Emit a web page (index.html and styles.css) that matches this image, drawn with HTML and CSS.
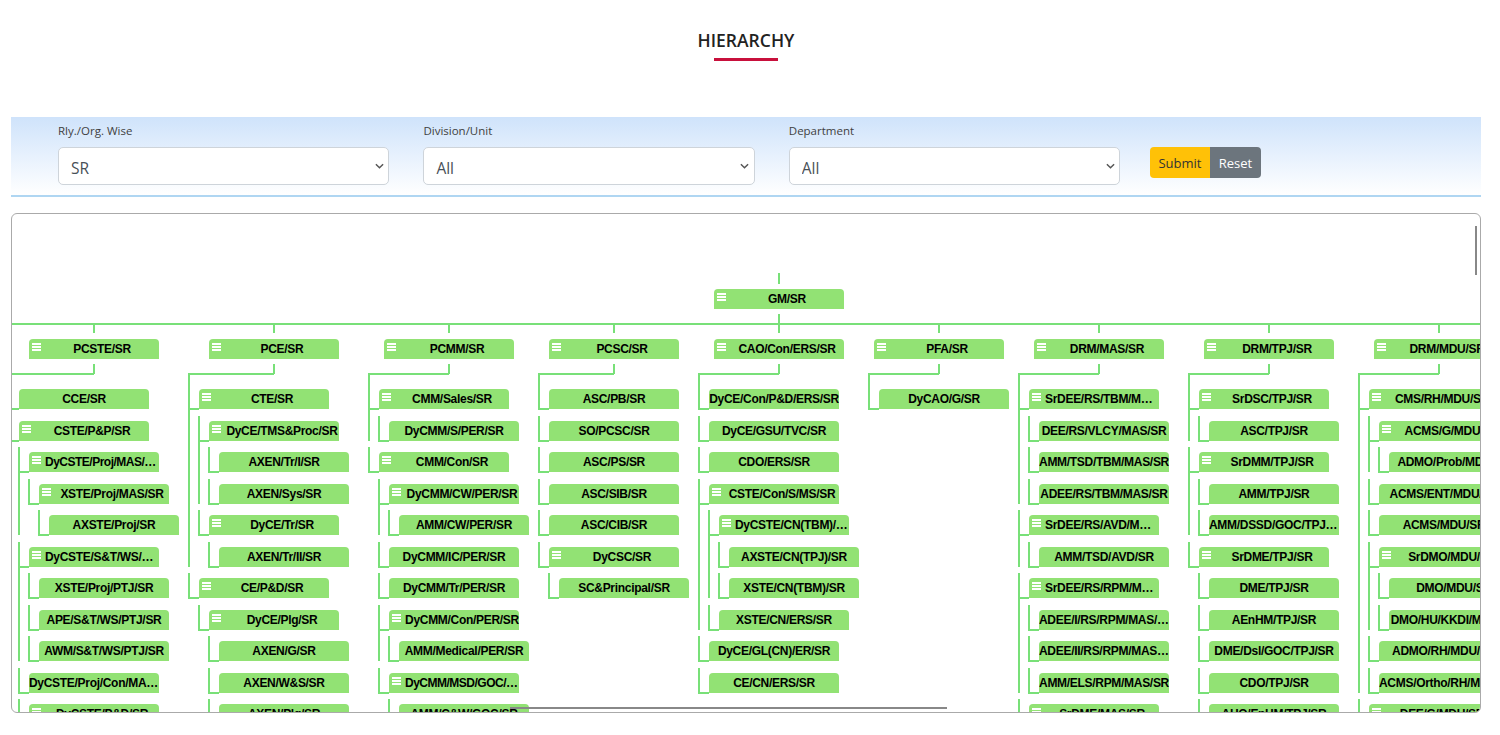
FILE: index.html
```html
<!DOCTYPE html>
<html lang="en">
  <head>
    <meta charset="UTF-8" />
    <meta name="viewport" content="width=device-width, initial-scale=1.0" />
    <title>Hierarchy</title>
    <link rel="stylesheet" href="styles.css">
  </head>
  <body>
    <div class="page">
      <div class="title-block">
        <h1 class="page-title">HIERARCHY</h1>
        <div class="title-line"></div>
      </div>

      <form class="filter-bar">
        <div class="field">
          <label for="rly">Rly./Org. Wise</label>
          <select id="rly"><option>SR</option></select>
        </div>
        <div class="field">
          <label for="division">Division/Unit</label>
          <select id="division"><option>All</option></select>
        </div>
        <div class="field">
          <label for="department">Department</label>
          <select id="department"><option>All</option></select>
        </div>
        <div class="btn-group">
          <button type="button" class="btn btn-submit">Submit</button>
          <button type="reset" class="btn btn-reset">Reset</button>
        </div>
      </form>

      <div class="chart">
        <div class="node menu root">GM/SR</div>
        <div class="trunk"></div>

        <div class="columns">
          <!-- PCSTE -->
          <div class="col w180 shift-10">
            <div class="node menu head">PCSTE/SR</div>
            <ul class="tree">
              <li><div class="node">CCE/SR</div></li>
              <li><div class="node menu">CSTE/P&amp;P/SR</div>
                <ul>
                  <li><div class="node menu tight">DyCSTE/Proj/MAS/SR</div>
                    <ul>
                      <li><div class="node menu">XSTE/Proj/MAS/SR</div>
                        <ul><li><div class="node">AXSTE/Proj/SR</div></li></ul>
                      </li>
                    </ul>
                  </li>
                  <li><div class="node menu">DyCSTE/S&amp;T/WS/PTJ/SR</div>
                    <ul>
                      <li><div class="node">XSTE/Proj/PTJ/SR</div></li>
                      <li><div class="node">APE/S&amp;T/WS/PTJ/SR</div></li>
                      <li><div class="node">AWM/S&amp;T/WS/PTJ/SR</div></li>
                    </ul>
                  </li>
                  <li><div class="node">DyCSTE/Proj/Con/MAS/SR</div></li>
                  <li><div class="node menu">DyCSTE/P&amp;D/SR</div></li>
                </ul>
              </li>
            </ul>
          </div>

          <!-- PCE -->
          <div class="col w175 shift-10">
            <div class="node menu head">PCE/SR</div>
            <ul class="tree">
              <li><div class="node menu">CTE/SR</div>
                <ul>
                  <li><div class="node menu">DyCE/TMS&amp;Proc/SR</div>
                    <ul>
                      <li><div class="node">AXEN/Tr/I/SR</div></li>
                      <li><div class="node">AXEN/Sys/SR</div></li>
                    </ul>
                  </li>
                  <li><div class="node menu">DyCE/Tr/SR</div>
                    <ul><li><div class="node">AXEN/Tr/II/SR</div></li></ul>
                  </li>
                </ul>
              </li>
              <li><div class="node menu">CE/P&amp;D/SR</div>
                <ul>
                  <li><div class="node menu">DyCE/Plg/SR</div>
                    <ul>
                      <li><div class="node">AXEN/G/SR</div></li>
                      <li><div class="node">AXEN/W&amp;S/SR</div></li>
                      <li><div class="node">AXEN/Plg/SR</div></li>
                    </ul>
                  </li>
                </ul>
              </li>
            </ul>
          </div>

          <!-- PCMM -->
          <div class="col w165 shift-5">
            <div class="node menu head">PCMM/SR</div>
            <ul class="tree">
              <li><div class="node menu">CMM/Sales/SR</div>
                <ul><li><div class="node">DyCMM/S/PER/SR</div></li></ul>
              </li>
              <li><div class="node menu">CMM/Con/SR</div>
                <ul>
                  <li><div class="node menu">DyCMM/CW/PER/SR</div>
                    <ul><li><div class="node">AMM/CW/PER/SR</div></li></ul>
                  </li>
                  <li><div class="node">DyCMM/IC/PER/SR</div></li>
                  <li><div class="node">DyCMM/Tr/PER/SR</div></li>
                  <li><div class="node menu">DyCMM/Con/PER/SR</div>
                    <ul><li><div class="node">AMM/Medical/PER/SR</div></li></ul>
                  </li>
                  <li><div class="node menu tight">DyCMM/MSD/GOC/PER/SR</div>
                    <ul><li><div class="node">AMM/C&amp;W/GOC/SR</div></li></ul>
                  </li>
                </ul>
              </li>
            </ul>
          </div>

          <!-- PCSC -->
          <div class="col w165 shift0">
            <div class="node menu head">PCSC/SR</div>
            <ul class="tree">
              <li><div class="node">ASC/PB/SR</div></li>
              <li><div class="node">SO/PCSC/SR</div></li>
              <li><div class="node">ASC/PS/SR</div></li>
              <li><div class="node">ASC/SIB/SR</div></li>
              <li><div class="node">ASC/CIB/SR</div></li>
              <li><div class="node menu">DyCSC/SR</div>
                <ul><li><div class="node">SC&amp;Principal/SR</div></li></ul>
              </li>
            </ul>
          </div>

          <!-- CAO/Con -->
          <div class="col w160 shift-5">
            <div class="node menu head">CAO/Con/ERS/SR</div>
            <ul class="tree">
              <li><div class="node">DyCE/Con/P&amp;D/ERS/SR</div></li>
              <li><div class="node">DyCE/GSU/TVC/SR</div></li>
              <li><div class="node">CDO/ERS/SR</div></li>
              <li><div class="node menu">CSTE/Con/S/MS/SR</div>
                <ul>
                  <li><div class="node menu">DyCSTE/CN(TBM)/ERS/SR</div>
                    <ul>
                      <li><div class="node">AXSTE/CN(TPJ)/SR</div></li>
                      <li><div class="node">XSTE/CN(TBM)/SR</div></li>
                    </ul>
                  </li>
                  <li><div class="node">XSTE/CN/ERS/SR</div></li>
                </ul>
              </li>
              <li><div class="node">DyCE/GL(CN)/ER/SR</div></li>
              <li><div class="node">CE/CN/ERS/SR</div></li>
            </ul>
          </div>

          <!-- PFA -->
          <div class="col w160 shift5">
            <div class="node menu head">PFA/SR</div>
            <ul class="tree">
              <li><div class="node">DyCAO/G/SR</div></li>
            </ul>
          </div>

          <!-- DRM/MAS -->
          <div class="col w170 shift-5">
            <div class="node menu head">DRM/MAS/SR</div>
            <ul class="tree">
              <li><div class="node menu">SrDEE/RS/TBM/MAS/SR</div>
                <ul>
                  <li><div class="node">DEE/RS/VLCY/MAS/SR</div></li>
                  <li><div class="node">AMM/TSD/TBM/MAS/SR</div></li>
                  <li><div class="node">ADEE/RS/TBM/MAS/SR</div></li>
                </ul>
              </li>
              <li><div class="node menu">SrDEE/RS/AVD/MAS/SR</div>
                <ul><li><div class="node">AMM/TSD/AVD/SR</div></li></ul>
              </li>
              <li><div class="node menu">SrDEE/RS/RPM/MAS/SR</div>
                <ul>
                  <li><div class="node">ADEE/I/RS/RPM/MAS/SR</div></li>
                  <li><div class="node">ADEE/II/RS/RPM/MAS/SR</div></li>
                  <li><div class="node">AMM/ELS/RPM/MAS/SR</div></li>
                </ul>
              </li>
              <li><div class="node menu">SrDME/MAS/SR</div></li>
            </ul>
          </div>

          <!-- DRM/TPJ -->
          <div class="col w170 shift-5">
            <div class="node menu head">DRM/TPJ/SR</div>
            <ul class="tree">
              <li><div class="node menu">SrDSC/TPJ/SR</div>
                <ul><li><div class="node">ASC/TPJ/SR</div></li></ul>
              </li>
              <li><div class="node menu">SrDMM/TPJ/SR</div>
                <ul>
                  <li><div class="node">AMM/TPJ/SR</div></li>
                  <li><div class="node">AMM/DSSD/GOC/TPJ/SR</div></li>
                </ul>
              </li>
              <li><div class="node menu">SrDME/TPJ/SR</div>
                <ul>
                  <li><div class="node">DME/TPJ/SR</div></li>
                  <li><div class="node">AEnHM/TPJ/SR</div></li>
                  <li><div class="node">DME/Dsl/GOC/TPJ/SR</div></li>
                  <li><div class="node">CDO/TPJ/SR</div></li>
                  <li><div class="node">AHO/EnHM/TPJ/SR</div></li>
                </ul>
              </li>
            </ul>
          </div>

          <!-- DRM/MDU -->
          <div class="col w170 shift-5">
            <div class="node menu head">DRM/MDU/SR</div>
            <ul class="tree">
              <li><div class="node menu">CMS/RH/MDU/SR</div>
                <ul>
                  <li><div class="node menu">ACMS/G/MDU/SR</div>
                    <ul><li><div class="node">ADMO/Prob/MDU/SR</div></li></ul>
                  </li>
                  <li><div class="node">ACMS/ENT/MDU/SR</div></li>
                  <li><div class="node">ACMS/MDU/SR</div></li>
                  <li><div class="node menu">SrDMO/MDU/SR</div>
                    <ul>
                      <li><div class="node">DMO/MDU/SR</div></li>
                      <li><div class="node">DMO/HU/KKDI/MDU/SR</div></li>
                    </ul>
                  </li>
                  <li><div class="node">ADMO/RH/MDU/SR</div></li>
                  <li><div class="node">ACMS/Ortho/RH/MDU/SR</div></li>
                </ul>
              </li>
              <li><div class="node menu">DEE/G/MDU/SR</div></li>
            </ul>
          </div>
        </div>

        <!-- scrollbars of the chart viewport -->
        <div class="scroll-v"></div>
        <div class="scroll-h"></div>
      </div>
    </div>
  </body>
</html>
```

FILE: styles.css
```css
* {
  box-sizing: border-box;
}

html,
body {
  margin: 0;
  height: 100%;
  overflow: hidden;
  background-color: #fff;
}

body {
  font-family: "Open Sans", "Noto Sans", sans-serif;
  color: #333;
}

.page {
  width: 1492px;
  padding: 0 11px;
}

.title-block {
  height: 117px;
  padding-top: 28px;
  text-align: center;
}

.page-title {
  margin: 0;
  font-size: 17.5px;
  line-height: 24px;
  font-weight: 600;
  color: #222;
}

.title-line {
  width: 64px;
  height: 3px;
  margin: 6px auto 0;
  background-color: #c8103c;
}

/* filter band */
.filter-bar {
  display: flex;
  height: 80px;
  padding: 7px 0 0 47px;
  background: linear-gradient(#cfe3fb, #fff);
  border-bottom: 2px solid #afd6f2;
}

.field {
  width: 331.4px;
  margin-right: 34px;
}

.field label {
  display: block;
  height: 23px;
  font-size: 11.5px;
  line-height: 14px;
  color: #3f3f3f;
}

.field select {
  display: block;
  width: 100%;
  height: 38px;
  padding: 3px 12px 0;
  font-family: inherit;
  font-size: 15.5px;
  color: #495057;
  background-color: #fff;
  background-image: url("data:image/svg+xml,%3Csvg xmlns='http://www.w3.org/2000/svg' viewBox='0 0 10 6'%3E%3Cpath fill='none' stroke='%23555' stroke-width='1.6' d='M1 1l4 4 4-4'/%3E%3C/svg%3E");
  background-repeat: no-repeat;
  background-position: right 4.5px center;
  background-size: 9px 6px;
  border: 1px solid #ced4da;
  border-radius: 5px;
  appearance: none;
}

.btn-group {
  display: flex;
  height: 31px;
  margin-top: 23px;
  margin-left: -4.2px;
}

.btn {
  padding: 0;
  font-family: inherit;
  font-size: 13px;
  border: none;
}

.btn-submit {
  width: 60px;
  color: #333;
  background-color: #ffc107;
  border-radius: 4px 0 0 4px;
}

.btn-reset {
  width: 51px;
  color: #fff;
  background-color: #6c757d;
  border-radius: 0 4px 4px 0;
}

/* chart viewport */
.chart {
  position: relative;
  height: 500px;
  margin-top: 16px;
  padding-top: 75px;
  overflow: hidden;
  background-color: #fff;
  border: 1px solid #aaa;
  border-radius: 6px;
}

.node {
  position: relative;
  width: 130px;
  height: 20px;
  padding: 0;
  overflow: hidden;
  font-family: "Liberation Sans", Arial, sans-serif;
  font-size: 12px;
  font-weight: bold;
  letter-spacing: -0.3px;
  line-height: 20px;
  text-align: center;
  white-space: nowrap;
  text-overflow: ellipsis;
  color: #000;
  background-color: #92e274;
  border-radius: 4px 4px 0 0;
}

.node.tight {
  letter-spacing: -0.5px;
}

/* menu icon inside a node that has children */
.node.menu {
  padding-left: 16px;
  background-image: linear-gradient(#fff 2px, transparent 2px, transparent 3px, #fff 3px, #fff 5px, transparent 5px, transparent 6px, #fff 6px);
  background-repeat: no-repeat;
  background-position: 3px 4px;
  background-size: 9px 8px;
}

.root {
  margin-left: 702px;
  overflow: visible;
}

.root::before,
.root::after,
.head::before,
.head::after {
  content: "";
  position: absolute;
  left: 64px;
  width: 2px;
  background-color: #78e078;
}

.root::before {
  top: -16px;
  height: 11px;
}

.root::after {
  top: 25px;
  height: 10px;
}

.trunk {
  height: 2px;
  margin: 14px 0;
  background-color: #78e078;
}

.columns {
  display: flex;
  padding-left: 17px;
}

.col {
  flex: none;
}

.w160 { width: 160px; }
.w165 { width: 165px; }
.w170 { width: 170px; }
.w175 { width: 175px; }
.w180 { width: 180px; }

.shift-10 { --shift: -10px; }
.shift-5 { --shift: -5px; }
.shift0 { --shift: 0px; }
.shift5 { --shift: 5px; }

.head {
  overflow: visible;
}

.head::before {
  top: -14px;
  height: 8px;
}

.head::after {
  top: 25px;
  height: 10px;
}

/* nested tree, connectors drawn on the list items */
.col ul {
  margin: 0 0 0 10px;
  padding: 0;
  list-style: none;
}

.col > .tree {
  position: relative;
  margin-top: 30px;
  margin-left: var(--shift);
}

.tree::before {
  content: "";
  position: absolute;
  top: -16px;
  left: -11px;
  width: calc(76px - var(--shift));
  height: 2px;
  background-color: #78e078;
}

.col li {
  position: relative;
}

.col li .node {
  margin-bottom: 11.5px;
}

.col li::before {
  content: "";
  position: absolute;
  top: -5px;
  bottom: 0;
  left: -11px;
  width: 2px;
  background-color: #78e078;
}

.col li::after {
  content: "";
  position: absolute;
  top: 19px;
  left: -11px;
  width: 11px;
  height: 2px;
  background-color: #78e078;
}

.col li:last-child::before {
  bottom: calc(100% - 21px);
}

.tree > li:first-child::before {
  top: -16px;
}

.scroll-v {
  position: absolute;
  top: 12px;
  right: 3px;
  width: 2px;
  height: 49px;
  background-color: #888;
}

.scroll-h {
  position: absolute;
  left: 498px;
  bottom: 3px;
  width: 437px;
  height: 2px;
  background-color: #888;
}
```
